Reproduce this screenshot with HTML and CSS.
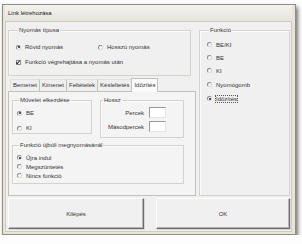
FILE: index.html
```html
<!DOCTYPE html>
<html lang="hu">
<head>
  <meta charset="UTF-8" />
  <title>Link létrehozása</title>
  <link rel="stylesheet" href="styles.css">
</head>
<body>
  <div class="window">
    <div class="titlebar">Link létrehozása</div>
    <div class="client">
      <div class="top">
        <div class="left">
          <fieldset class="grp nyomas">
            <legend>Nyomás típusa</legend>
            <div class="row two">
              <label class="opt"><span class="radio on"></span>Rövid nyomás</label>
              <label class="opt"><span class="radio"></span>Hosszú nyomás</label>
            </div>
            <label class="opt chk-row"><span class="check on"></span>Funkció végrehajtása a nyomás után</label>
          </fieldset>

          <div class="tabs">
            <span class="tab">Bemenet</span>
            <span class="tab">Kimenet</span>
            <span class="tab">Feltételek</span>
            <span class="tab">Késleltetés</span>
            <span class="tab active">Időzítés</span>
          </div>
          <div class="panel">
            <div class="panel-row">
              <fieldset class="grp muvelet">
                <legend>Művelet elkezdése</legend>
                <label class="opt"><span class="radio on"></span>BE</label>
                <label class="opt"><span class="radio"></span>KI</label>
              </fieldset>
              <fieldset class="grp hossz">
                <legend>Hossz</legend>
                <div class="fields">
                  <span class="lbl">Percek</span><span class="box"></span>
                  <span class="lbl">Másodpercek</span><span class="box"></span>
                </div>
              </fieldset>
            </div>
            <fieldset class="grp ujra">
              <legend>Funkció újbóli megnyomásánál</legend>
              <label class="opt"><span class="radio on"></span>Újra indul</label>
              <label class="opt"><span class="radio"></span>Megszüntetés</label>
              <label class="opt"><span class="radio"></span>Nincs funkció</label>
            </fieldset>
          </div>
        </div>

        <fieldset class="grp funkcio">
          <legend>Funkció</legend>
          <label class="opt"><span class="radio"></span>BE/KI</label>
          <label class="opt"><span class="radio"></span>BE</label>
          <label class="opt"><span class="radio"></span>KI</label>
          <label class="opt"><span class="radio"></span>Nyomógomb</label>
          <label class="opt"><span class="radio on"></span><span class="focus">Időzítés</span></label>
        </fieldset>
      </div>

      <div class="buttons">
        <button class="btn exit">Kilépés</button>
        <button class="btn ok">OK</button>
      </div>
    </div>
  </div>
</body>
</html>
```

FILE: styles.css
```css
* {
  box-sizing: border-box;
}
body {
  margin: 0;
  background-color: #fdfdfd;
  font-family: "Liberation Sans", Arial, sans-serif;
  font-size: 6px;
  color: #333;
}
.window {
  margin: 4px 0 0 2px;
  width: 294px;
  height: 231px;
  background-color: #e8e5d8;
  border: 1px solid #8e8d86;
  padding: 0 3px 2px 2px;
  box-shadow: 2px 3px 4px rgba(0, 0, 0, 0.55);
}
.titlebar {
  height: 16px;
  line-height: 17px;
  padding-left: 3px;
  background: linear-gradient(#f3f2ee, #e6e4da);
  color: #222;
}
.client {
  height: 211px;
  background-color: #f0f0f0;
  border: 1px solid #cfccbf;
  padding: 5px 1px 2px 2px;
}
.top {
  display: flex;
  gap: 3px;
  height: 169px;
}
.left {
  width: 188px;
}
.grp {
  margin: 0;
  border: 1px solid #d3d3cc;
  box-shadow: inset 1px 1px 0 #fbfbfb;
  padding: 0;
}
.grp legend {
  padding: 0 1px;
  margin-left: 2px;
  line-height: 7px;
}
.opt {
  display: flex;
  align-items: center;
  height: 8px;
  white-space: nowrap;
}
.radio {
  width: 5px;
  height: 5px;
  border-radius: 50%;
  border: 1px solid #8a8a8a;
  border-right-color: #d8d8d8;
  border-bottom-color: #d8d8d8;
  background-color: #fff;
  margin-right: 4px;
  display: flex;
  align-items: center;
  justify-content: center;
}
.radio.on::after {
  content: "";
  width: 2px;
  height: 2px;
  border-radius: 50%;
  background-color: #222;
}
.check {
  width: 5px;
  height: 5px;
  border: 1px solid #8a8a8a;
  background-color: #fff;
  margin-right: 4px;
  position: relative;
}
.check.on::after {
  content: "";
  position: absolute;
  left: 0;
  top: -1px;
  width: 1px;
  height: 3px;
  border: solid #222;
  border-width: 0 1px 1px 0;
  transform: rotate(40deg);
}
.nyomas {
  width: 183px;
  height: 49px;
  padding: 9px 0 0 7px;
}
.nyomas .two {
  display: grid;
  grid-template-columns: 82px auto;
}
.nyomas .chk-row {
  margin-top: 7px;
}
.tabs {
  display: flex;
  align-items: flex-end;
  height: 15px;
  padding-left: 2px;
  margin-top: 0;
}
.tab {
  height: 12px;
  line-height: 11px;
  padding: 0 2px;
  border-left: 1px solid #c2c2ba;
  border-top: 1px solid #e2e2dc;
  background-color: #efefef;
}
.tab:first-child {
  border-left-color: #e2e2dc;
}
.tab.active {
  height: 14px;
  line-height: 13px;
  background-color: #fafafa;
  border: 1px solid #c2c2ba;
  border-bottom: none;
  margin-bottom: -1px;
  position: relative;
}
.panel {
  height: 105px;
  border: 1px solid #c2c2ba;
  background-color: #f4f4f4;
  padding: 5px 0 0 3px;
}
.panel-row {
  display: flex;
  gap: 8px;
  align-items: flex-start;
}
.muvelet {
  width: 80px;
  height: 37px;
  padding: 5px 0 0 4px;
}
.muvelet .opt + .opt {
  margin-top: 7px;
}
.hossz {
  width: 84px;
  height: 41px;
}
.fields {
  display: grid;
  grid-template-columns: 40px 17px;
  column-gap: 5px;
  row-gap: 3px;
  align-items: center;
  padding: 3px 0 0 3px;
}
.lbl {
  text-align: right;
}
.box {
  height: 11px;
  background-color: #fff;
  border: 1px solid #9a9a9a;
  border-right-color: #e4e4e4;
  border-bottom-color: #e4e4e4;
}
.ujra {
  width: 172px;
  height: 42px;
  margin-top: 4px;
  padding: 4px 0 0 4px;
}
.ujra .opt {
  height: 9px;
}
.funkcio {
  width: 91px;
  height: 169px;
  padding: 6px 0 0 7px;
}
.funkcio .opt {
  height: 9px;
  margin-bottom: 4px;
}
.funkcio .opt:nth-of-type(3),
.funkcio .opt:nth-of-type(4) {
  margin-bottom: 5px;
}
.focus {
  outline: 1px dotted #555;
  outline-offset: 0;
}
.buttons {
  display: flex;
  gap: 12px;
  margin-top: 2px;
}
.btn {
  height: 31px;
  font-family: inherit;
  font-size: 6px;
  color: #333;
  background-color: #f0f0f0;
  border: 1px solid #fff;
  border-right-color: #6c6c6c;
  border-bottom-color: #6c6c6c;
  box-shadow: inset -1px -1px 0 #b4b4b4, 1px 1px 0 #d8d8d8;
  padding: 0;
}
.btn.exit {
  width: 136px;
}
.btn.ok {
  width: 134px;
}
```
